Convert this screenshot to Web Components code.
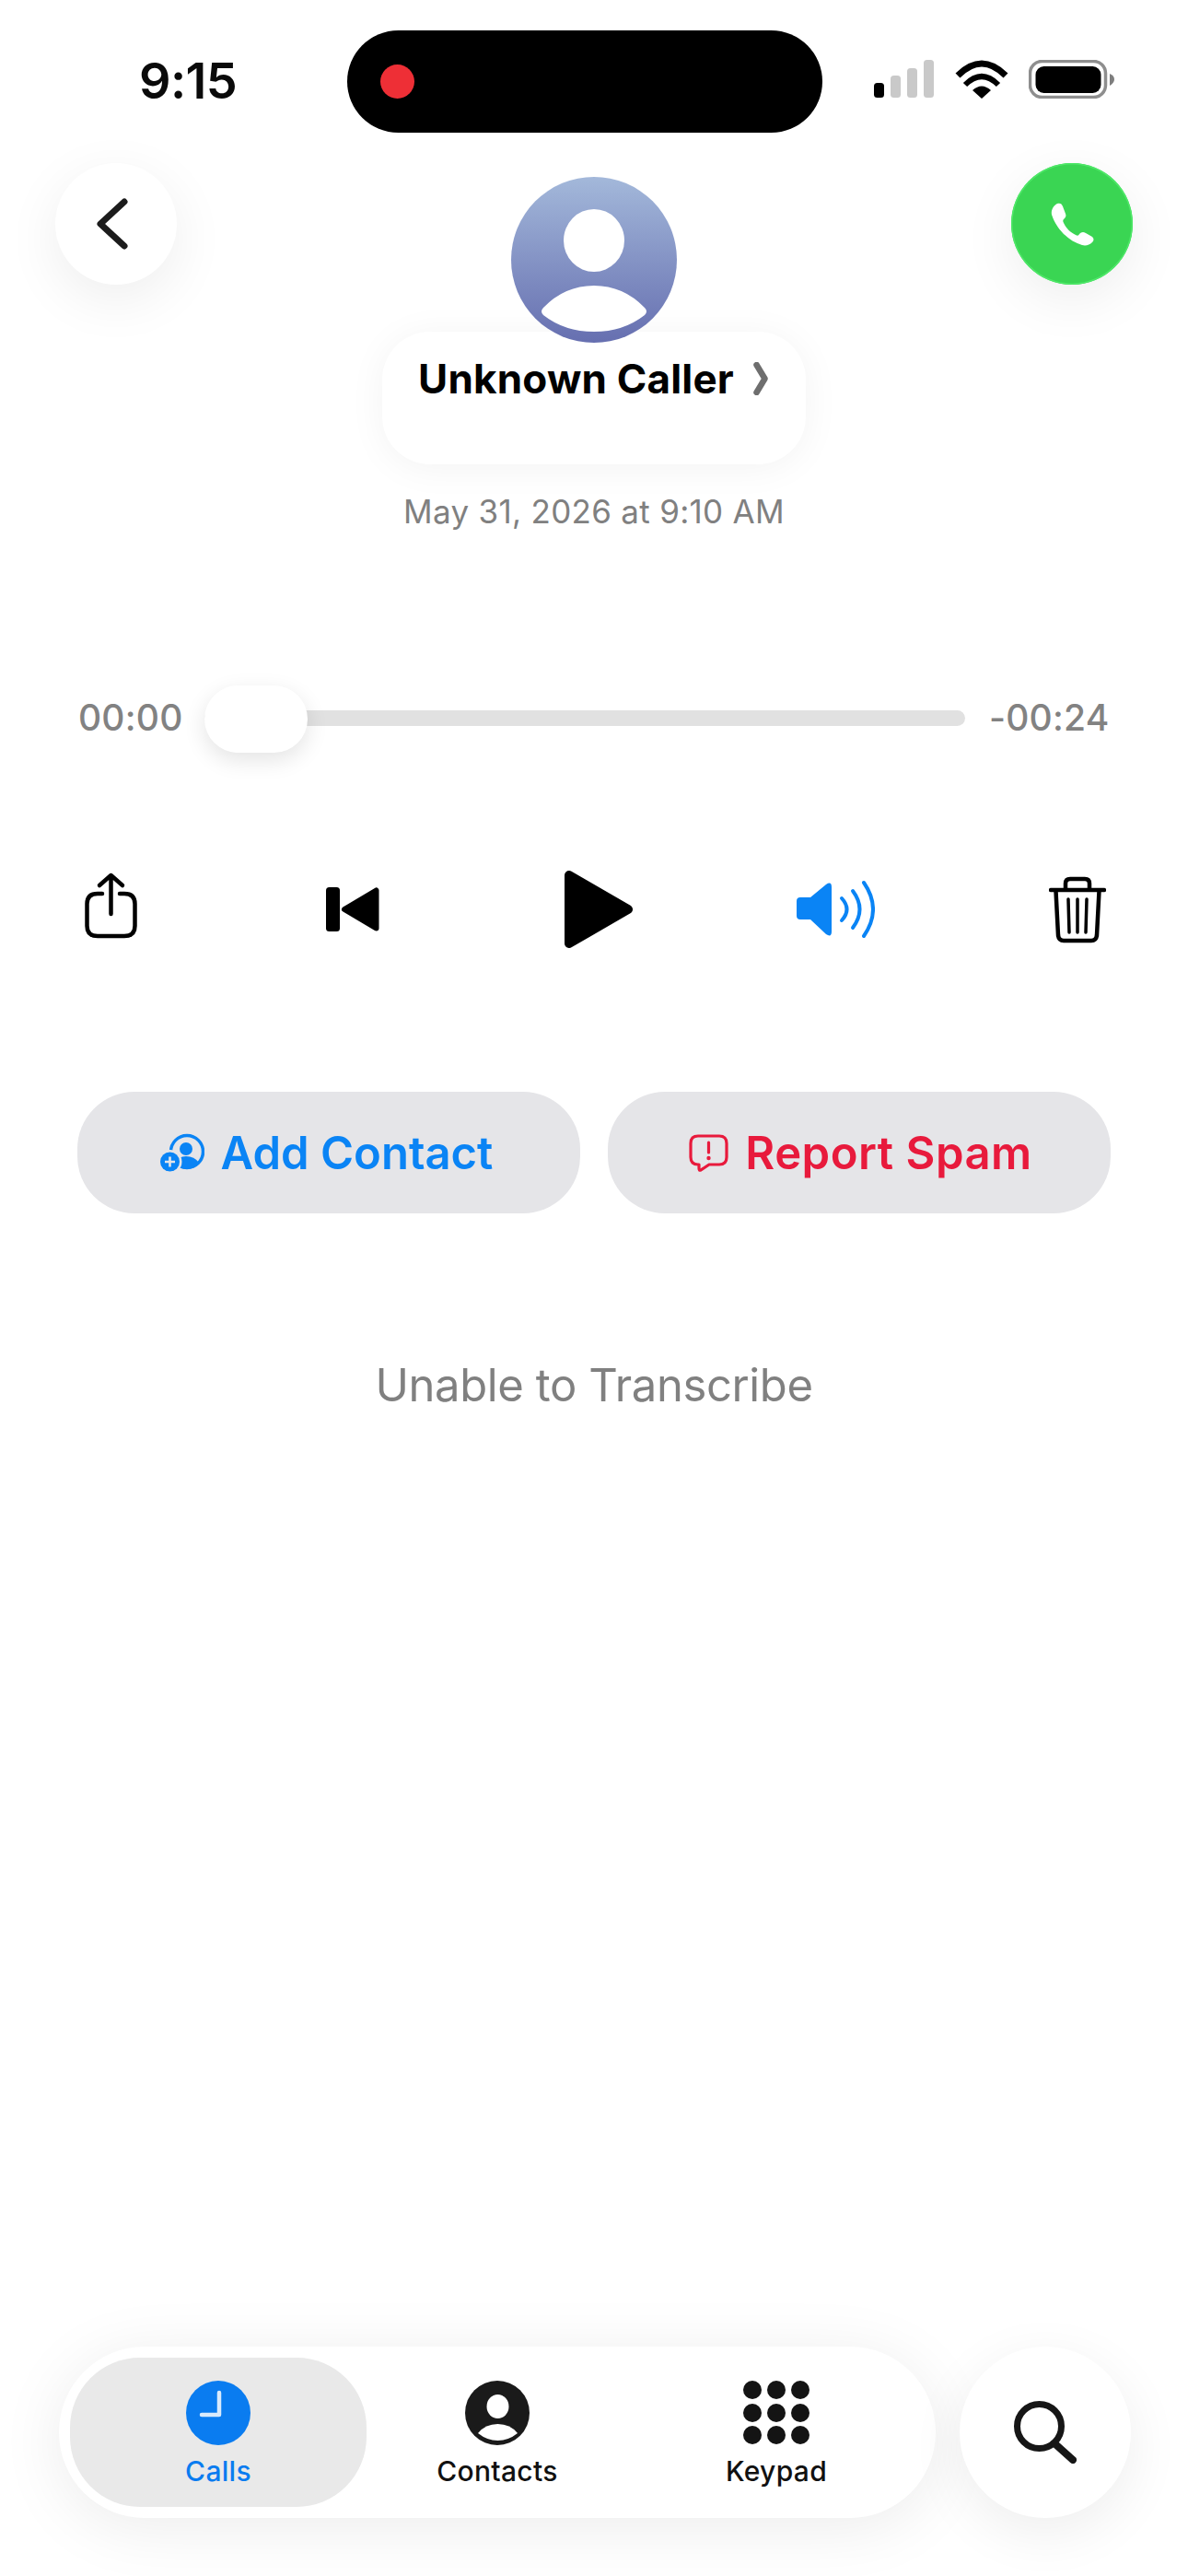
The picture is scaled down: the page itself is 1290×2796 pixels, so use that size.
<!DOCTYPE html>
<html lang="en">
<head>
<meta charset="utf-8">
<title>Voicemail</title>
<style>
    html, body { margin: 0; background: #fff; }
    body { font-family: Inter, "Liberation Sans", sans-serif; }
</style>
</head>
<body>
<voicemail-screen></voicemail-screen>

<script>
const statusBarTemplate = document.createElement('template');
statusBarTemplate.innerHTML = `
<style>
    :host {
        display: flex;
        height: 177px;
        padding-top: 33px;
        box-sizing: border-box;
    }
    #time {
        width: 377px;
        padding: 23px 0 0 151px;
        box-sizing: border-box;
        height: 111px;
        font-size: 54px;
        line-height: 66px;
        font-weight: 600;
        letter-spacing: -.6px;
        color: #0a0a0a;
        margin-top: -1px;
    }
    #island {
        width: 516px;
        height: 111px;
        border-radius: 56px;
        background: #000;
        display: flex;
        align-items: center;
        padding-left: 36px;
        box-sizing: border-box;
    }
    #dot { width: 37px; height: 37px; border-radius: 50%; background: #ee2f36; }
    #icons { display: flex; align-items: flex-start; margin: 32px 0 0 56px; }
    #icons svg { display: block; }
    #wifi { margin-left: 23px; }
    #battery { margin-left: 22px; }
</style>
<div id="time">9:15</div>
<div id="island"><div id="dot"></div></div>
<div id="icons">
    <svg width="65" height="42" viewBox="0 0 65 42">
        <rect x="0" y="25" width="11" height="16" rx="3.5" fill="#000"/>
        <rect x="18" y="17" width="11" height="24" rx="3.5" fill="#c9c9c9"/>
        <rect x="36" y="9" width="11" height="32" rx="3.5" fill="#c9c9c9"/>
        <rect x="54" y="0" width="11" height="41" rx="3.5" fill="#c9c9c9"/>
    </svg>
    <svg id="wifi" width="58" height="42" viewBox="0 0 58 42">
        <path d="M3 17Q29 -9 55 17" fill="none" stroke="#000" stroke-width="7"/>
        <path d="M11 27Q29 9 47 27" fill="none" stroke="#000" stroke-width="6"/>
        <path d="M29 42L19 33Q29 24 39 33Z" fill="#000"/>
    </svg>
    <svg id="battery" width="93" height="42" viewBox="0 0 93 42">
        <rect x="1.5" y="1.5" width="82" height="39" rx="13" fill="none" stroke="#8e8e8e" stroke-width="3.5"/>
        <rect x="7.5" y="7" width="71" height="29" rx="9" fill="#000"/>
        <path d="M88 15Q93 17 93 21Q93 25 88 28Z" fill="#7e7e7e"/>
    </svg>
</div>
`;

class StatusBar extends HTMLElement
{
    constructor()
    {
        super();
        this.attachShadow({mode: 'open'});
        this.shadowRoot.appendChild(statusBarTemplate.content.cloneNode(true));
    }
}

const roundButtonTemplate = document.createElement('template');
roundButtonTemplate.innerHTML = `
<style>
    :host {
        display: flex;
        align-items: center;
        justify-content: center;
        width: var(--size, 132px);
        height: var(--size, 132px);
        border-radius: 50%;
        background: var(--fill, #fff);
        box-shadow: inset 0 0 0 var(--rim, 0) #4ee868, 0 16px 60px rgba(0, 0, 0, .07);
        flex: none;
    }
</style>
<slot></slot>
`;

class RoundButton extends HTMLElement
{
    constructor()
    {
        super();
        this.attachShadow({mode: 'open'});
        this.shadowRoot.appendChild(roundButtonTemplate.content.cloneNode(true));
    }
}

const callerCardTemplate = document.createElement('template');
callerCardTemplate.innerHTML = `
<style>
    :host {
        display: flex;
        flex-direction: column;
        align-items: center;
        padding-top: 15px;
    }
    #avatar {
        display: block;
        position: relative;
        z-index: 1;
    }
    #pill {
        width: 460px;
        height: 144px;
        margin-top: -12px;
        border-radius: 52px;
        background: #fff;
        box-shadow: 0 4px 40px rgba(0, 0, 0, .05);
        display: flex;
        align-items: flex-start;
        box-sizing: border-box;
        padding: 24px 0 0 39px;
    }
    #name {
        font-size: 44px;
        line-height: 54px;
        font-weight: 700;
        letter-spacing: .2px;
        color: #000;
    }
    #more { display: block; margin: 9px 0 0 21px; }
    #date {
        margin-top: 30px;
        font-size: 35px;
        line-height: 42px;
        letter-spacing: .3px;
        color: #808080;
    }
</style>
<svg id="avatar" width="180" height="180" viewBox="0 0 180 180">
    <defs>
        <linearGradient id="avatar-fill" x1="0" y1="0" x2="0" y2="1">
            <stop offset="0" stop-color="#a3b8da"/>
            <stop offset="1" stop-color="#666fb0"/>
        </linearGradient>
    </defs>
    <circle cx="90" cy="90" r="90" fill="url(#avatar-fill)"/>
    <ellipse cx="90" cy="69" rx="33" ry="34" fill="#fff"/>
    <path d="M35 142Q58 118 90 118Q122 118 145 142Q149 146 145 150Q122 168 90 168Q58 168 35 150Q31 146 35 142Z" fill="#fff"/>
</svg>
<div id="pill">
    <span id="name"><slot name="name"></slot></span>
    <svg id="more" width="16" height="36" viewBox="0 0 16 36">
        <path d="M3.5 3L12.5 18L3.5 33" fill="none" stroke="#6e6e6e" stroke-width="6.5" stroke-linecap="round" stroke-linejoin="round"/>
    </svg>
</div>
<div id="date"><slot name="date"></slot></div>
`;

class CallerCard extends HTMLElement
{
    constructor()
    {
        super();
        this.attachShadow({mode: 'open'});
        this.shadowRoot.appendChild(callerCardTemplate.content.cloneNode(true));
    }
}

const scrubBarTemplate = document.createElement('template');
scrubBarTemplate.innerHTML = `
<style>
    :host {
        display: flex;
        align-items: center;
        height: 73px;
        padding-left: 85px;
        font-size: 39px;
        font-weight: 500;
        letter-spacing: .2px;
        color: #828282;
    }
    #start { width: 137px; margin-top: -2px; }
    #track {
        position: relative;
        width: 826px;
        height: 17px;
        border-radius: 9px;
        background: #e1e1e1;
    }
    #thumb {
        position: absolute;
        left: 0;
        top: -27px;
        width: 112px;
        height: 73px;
        border-radius: 37px;
        background: #fff;
        box-shadow: 0 8px 24px rgba(0, 0, 0, .11);
    }
    #end { margin-left: 26px; margin-top: -2px; }
</style>
<span id="start"><slot name="start"></slot></span>
<div id="track"><div id="thumb"></div></div>
<span id="end"><slot name="end"></slot></span>
`;

class ScrubBar extends HTMLElement
{
    constructor()
    {
        super();
        this.attachShadow({mode: 'open'});
        this.shadowRoot.appendChild(scrubBarTemplate.content.cloneNode(true));
    }
}

const playerControlsTemplate = document.createElement('template');
playerControlsTemplate.innerHTML = `
<style>
    :host {
        display: flex;
        height: 84px;
        padding-left: 92px;
    }
    svg { display: block; flex: none; }
    #skip { margin-left: 205px; }
    #play { margin-left: 201px; }
    #speaker { margin-left: 178px; }
    #trash { margin-left: 189px; }
</style>
<svg width="57" height="84" viewBox="0 0 57 84" fill="none" stroke="#000" stroke-width="4.5" stroke-linecap="round" stroke-linejoin="round">
    <path d="M19 25H14Q2.5 25 2.5 36V60Q2.5 71 14 71H43Q54.5 71 54.5 60V36Q54.5 25 43 25H38"/>
    <path d="M28.5 6V47M16 16L28.5 5L41 16"/>
</svg>
<svg id="skip" width="58" height="84" viewBox="0 0 58 84">
    <rect x="0" y="18" width="15" height="48" rx="3.5" fill="#000"/>
    <path d="M20 42L54.5 21.5V62.5Z" fill="#000" stroke="#000" stroke-width="6" stroke-linejoin="round"/>
</svg>
<svg id="play" width="74" height="84" viewBox="0 0 74 84">
    <path d="M5 5L69 42L5 79Z" fill="#000" stroke="#000" stroke-width="10" stroke-linejoin="round"/>
</svg>
<svg id="speaker" width="85" height="84" viewBox="0 0 85 84">
    <path d="M4 29H15L32 15Q38 11 38 18V66Q38 73 32 69L15 53H4Q0 53 0 49V33Q0 29 4 29Z" fill="#0a84f5"/>
    <g fill="none" stroke="#0a84f5" stroke-width="4" stroke-linecap="round">
        <path d="M49 30Q60 42 49 54"/>
        <path d="M61 22Q76 42 61 62"/>
        <path d="M73 13Q93 42 73 71"/>
    </g>
</svg>
<svg id="trash" width="62" height="84" viewBox="0 0 62 84" fill="none" stroke="#000" stroke-linecap="round" stroke-linejoin="round">
    <path d="M2 21H60" stroke-width="4.5"/>
    <path d="M18 20V14Q18 9 23 9H39Q44 9 44 14V20" stroke-width="4.5"/>
    <path d="M7.5 22L10 70Q10.5 76 16 76H46Q51.5 76 52 70L54.5 22" stroke-width="4.5"/>
    <path d="M21 31L22 67M31 31V67M41 31L40 67" stroke-width="3.5"/>
</svg>
`;

class PlayerControls extends HTMLElement
{
    constructor()
    {
        super();
        this.attachShadow({mode: 'open'});
        this.shadowRoot.appendChild(playerControlsTemplate.content.cloneNode(true));
    }
}

const actionButtonTemplate = document.createElement('template');
actionButtonTemplate.innerHTML = `
<style>
    :host {
        display: flex;
        align-items: center;
        justify-content: center;
        box-sizing: border-box;
        width: 546px;
        height: 132px;
        border-radius: 62px;
        background: #e5e5e8;
        color: var(--tint);
        font-size: 49px;
        font-weight: 600;
        gap: 18px;
    }
    ::slotted(svg) { display: block; flex: none; }
</style>
<slot name="icon"></slot>
<slot></slot>
`;

class ActionButton extends HTMLElement
{
    constructor()
    {
        super();
        this.attachShadow({mode: 'open'});
        this.shadowRoot.appendChild(actionButtonTemplate.content.cloneNode(true));
    }
}

const tabItemTemplate = document.createElement('template');
tabItemTemplate.innerHTML = `
<style>
    :host {
        display: flex;
        flex-direction: column;
        align-items: center;
        box-sizing: border-box;
        height: 162px;
        padding-top: 25px;
        border-radius: 76px;
        color: #111;
        font-size: 30px;
        line-height: 36px;
        font-weight: 450;
        letter-spacing: .3px;
    }
    :host([selected]) {
        background: #e9e9e9;
        color: #0a7cf0;
    }
    ::slotted(svg) { display: block; }
    #label { margin-top: 10px; }
</style>
<slot name="icon"></slot>
<span id="label"><slot></slot></span>
`;

class TabItem extends HTMLElement
{
    constructor()
    {
        super();
        this.attachShadow({mode: 'open'});
        this.shadowRoot.appendChild(tabItemTemplate.content.cloneNode(true));
    }
}

const tabBarTemplate = document.createElement('template');
tabBarTemplate.innerHTML = `
<style>
    :host {
        display: flex;
        padding: 0 63px 0 64px;
        gap: 26px;
    }
    #tabs {
        display: grid;
        grid-template-columns: 322px 284px 322px;
        box-sizing: border-box;
        width: 952px;
        height: 186px;
        padding: 12px;
        border-radius: 93px;
        background: #fff;
        box-shadow: 0 10px 70px rgba(0, 0, 0, .08);
    }
</style>
<div id="tabs"><slot></slot></div>
<slot name="search"></slot>
`;

class TabBar extends HTMLElement
{
    constructor()
    {
        super();
        this.attachShadow({mode: 'open'});
        this.shadowRoot.appendChild(tabBarTemplate.content.cloneNode(true));
    }
}

const screenTemplate = document.createElement('template');
screenTemplate.innerHTML = `
<style>
    :host {
        display: flex;
        flex-direction: column;
        width: 1290px;
        height: 2796px;
        overflow: hidden;
        background: #fff;
    }
    #head {
        display: flex;
        justify-content: space-between;
        align-items: flex-start;
        padding: 0 60px;
    }
    caller-card { width: 460px; }
    scrub-bar { margin-top: 167px; }
    player-controls { margin-top: 129px; }
    #actions {
        display: flex;
        gap: 30px;
        padding-left: 84px;
        margin-top: 156px;
    }
    #note {
        margin-top: 157px;
        text-align: center;
        font-size: 49px;
        line-height: 60px;
        font-weight: 400;
        letter-spacing: -.4px;
        color: #808080;
    }
    tab-bar { margin-top: auto; margin-bottom: 63px; }
    svg { display: block; }
    #back-icon { margin-right: 9px; }
</style>
<status-bar></status-bar>
<div id="head">
    <round-button>
        <svg id="back-icon" width="34" height="56" viewBox="0 0 34 56">
            <path d="M30 4L4 28L30 52" fill="none" stroke="#1c1c1c" stroke-width="7" stroke-linecap="round" stroke-linejoin="round"/>
        </svg>
    </round-button>
    <caller-card>
        <span slot="name">Unknown Caller</span>
        <span slot="date">May 31, 2026 at 9:10 AM</span>
    </caller-card>
    <round-button style="--fill: #3ad553; --rim: 1.5px">
        <svg width="47" height="47" viewBox="0 0 47 47">
            <path d="M7 1C10 0 12 1 13 4L16 12C17 15 16 16 14 18C13 19 13 20 14 22C17 28 21 32 27 35C29 36 30 36 31 34C33 32 35 31 38 33L45 37C47 39 47 41 45 43C42 46 38 47 34 46C20 42 6 29 1 13C0 8 3 3 7 1Z" fill="#fff"/>
        </svg>
    </round-button>
</div>
<scrub-bar>
    <span slot="start">00:00</span>
    <span slot="end">-00:24</span>
</scrub-bar>
<player-controls></player-controls>
<div id="actions">
    <action-button style="--tint: #0a84f5; padding-right: 5px">
        <svg slot="icon" width="48" height="42" viewBox="0 0 48 42">
            <circle cx="29" cy="20" r="17.5" fill="none" stroke="#0a84f5" stroke-width="3.5"/>
            <circle cx="28" cy="17" r="7" fill="#0a84f5"/>
            <path d="M15 32Q20 25 28 25Q37 25 42 32Q37 39 29 39Q20 39 15 32Z" fill="#0a84f5"/>
            <circle cx="10.5" cy="31" r="13" fill="#e5e5e8"/>
            <circle cx="10.5" cy="31" r="10.5" fill="#0a84f5"/>
            <path d="M10.5 25.5V36.5M5 31H16" stroke="#e5e5e8" stroke-width="2.6"/>
        </svg>
        Add Contact
    </action-button>
    <action-button style="--tint: #e81a3c; letter-spacing: .5px; padding-left: 3px">
        <svg slot="icon" width="43" height="41" viewBox="0 0 43 41">
            <path d="M10 2H33Q41 2 41 10V25Q41 33 33 33H22L13 39Q11 40 11 37V33H10Q2 33 2 25V10Q2 2 10 2Z" fill="none" stroke="#e81a3c" stroke-width="3.2" stroke-linejoin="round"/>
            <path d="M21.5 9V20" stroke="#e81a3c" stroke-width="3.2" stroke-linecap="round"/>
            <circle cx="21.5" cy="26" r="2.2" fill="#e81a3c"/>
        </svg>
        Report Spam
    </action-button>
</div>
<div id="note">Unable to Transcribe</div>
<tab-bar>
    <tab-item selected>
        <svg slot="icon" width="70" height="70" viewBox="0 0 70 70">
            <circle cx="35" cy="35" r="35" fill="#0a7cf0"/>
            <path d="M36 13V37H17" fill="none" stroke="#d9eafc" stroke-width="4.5" stroke-linecap="round" stroke-linejoin="round"/>
        </svg>
        Calls
    </tab-item>
    <tab-item>
        <svg slot="icon" width="70" height="70" viewBox="0 0 70 70">
            <circle cx="35" cy="35" r="35" fill="#1a1a1a"/>
            <ellipse cx="35.5" cy="28" rx="12" ry="13" fill="#fff"/>
            <path d="M14 57Q22 47 35.5 47Q49 47 57 57Q47 65 35.5 65Q24 65 14 57Z" fill="#fff"/>
        </svg>
        Contacts
    </tab-item>
    <tab-item>
        <svg slot="icon" width="72" height="70" viewBox="0 0 72 70" fill="#141414">
            <circle cx="10" cy="10" r="10"/><circle cx="36" cy="10" r="10"/><circle cx="62" cy="10" r="10"/>
            <circle cx="10" cy="35" r="10"/><circle cx="36" cy="35" r="10"/><circle cx="62" cy="35" r="10"/>
            <circle cx="10" cy="59" r="10"/><circle cx="36" cy="59" r="10"/><circle cx="62" cy="59" r="10"/>
        </svg>
        Keypad
    </tab-item>
    <round-button slot="search" style="--size: 186px">
        <svg width="68" height="68" viewBox="0 0 68 68" fill="none" stroke="#161616" stroke-linecap="round">
            <circle cx="27.5" cy="27.5" r="24" stroke-width="7"/>
            <path d="M44 46L64 64" stroke-width="8"/>
        </svg>
    </round-button>
</tab-bar>
`;

class VoicemailScreen extends HTMLElement
{
    constructor()
    {
        super();
        this.attachShadow({mode: 'open'});
        this.shadowRoot.appendChild(screenTemplate.content.cloneNode(true));
    }
}

window.customElements.define('status-bar', StatusBar);
window.customElements.define('round-button', RoundButton);
window.customElements.define('caller-card', CallerCard);
window.customElements.define('scrub-bar', ScrubBar);
window.customElements.define('player-controls', PlayerControls);
window.customElements.define('action-button', ActionButton);
window.customElements.define('tab-item', TabItem);
window.customElements.define('tab-bar', TabBar);
window.customElements.define('voicemail-screen', VoicemailScreen);
</script>
</body>
</html>
